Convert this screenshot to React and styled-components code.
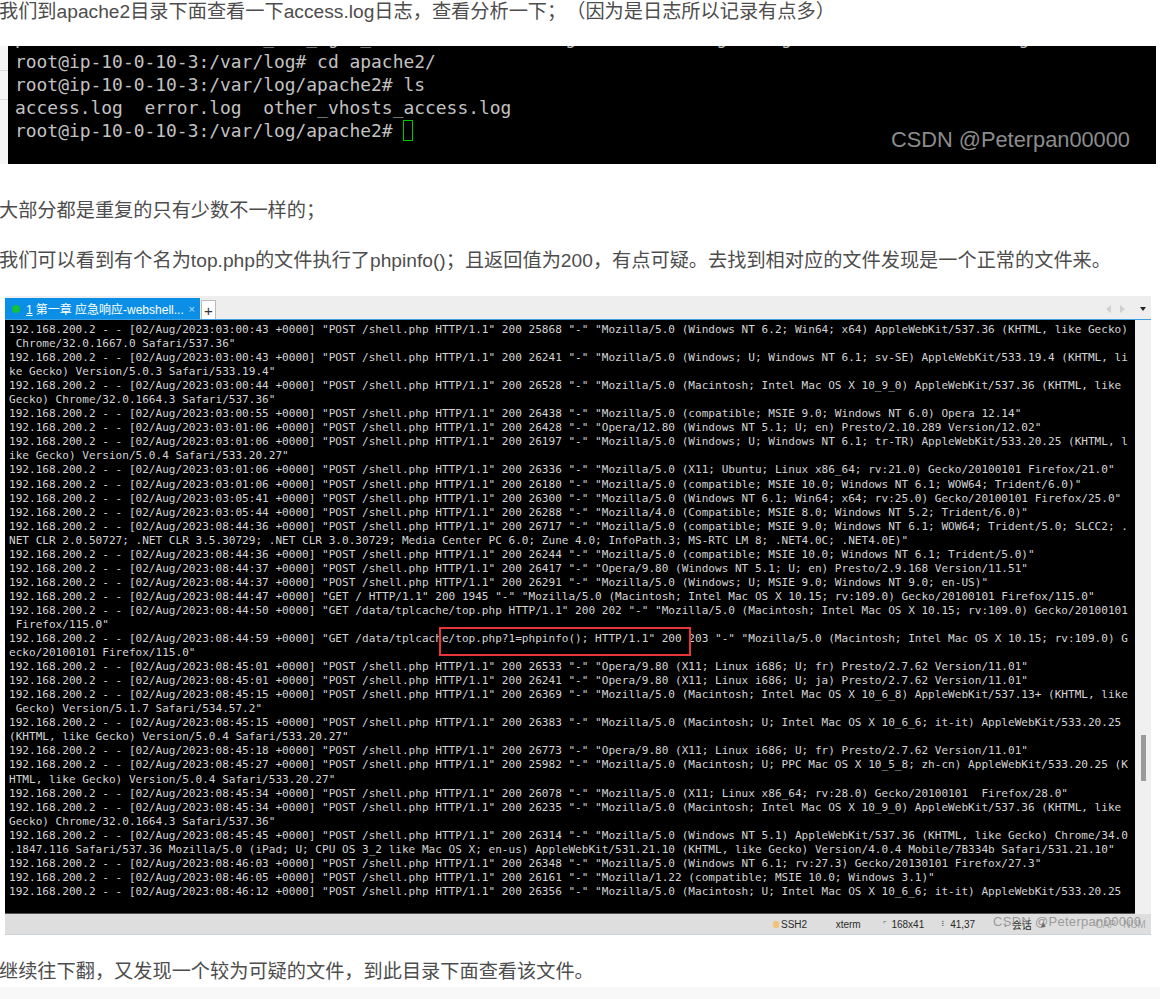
import React from "react";
import styled, { createGlobalStyle } from "styled-components";

const GlobalStyle = createGlobalStyle`
  html, body {
    margin: 0;
    padding: 0;
    background: #ffffff;
  }
`;

const Page = styled.div`
  width: 1160px;
  height: 999px;
  overflow: hidden;
  position: relative;
  display: flex;
  flex-direction: column;
  background: linear-gradient(#ffffff 987px, #f8f8f8 987px);
  font-family: "Liberation Sans", "Noto Sans CJK SC", sans-serif;
`;

const Para = styled.p`
  margin: ${(p) => p.$top}px 0 0 -1px;
  height: 24px;
  font-size: 19.2px;
  line-height: 24px;
  color: #4d4d4d;
  white-space: nowrap;
  text-spacing-trim: space-all;
`;

const ShotRow = styled.div`
  margin-top: 22px;
  height: 118px;
  display: flex;
`;

const SideStrip = styled.div`
  width: 8px;
  background: #f6f6f6;
  background-image: linear-gradient(#dddddd, #dddddd), linear-gradient(#dddddd, #dddddd);
  background-size: 100% 1px;
  background-position: 0 24px, 0 53px;
  background-repeat: no-repeat;
`;

const ShellShot = styled.div`
  position: relative;
  width: 1141px;
  background: #000000;
  overflow: hidden;
  padding-left: 7px;
  font-family: "DejaVu Sans Mono", monospace;
  font-size: 17.93px;
  line-height: 23px;
  color: #c2c2c2;
`;

const ShellLine = styled.div`
  white-space: pre;
  height: 23px;
`;

const CutLine = styled(ShellLine)`
  margin-top: -20px;
  margin-bottom: 1px;
`;

const Cursor = styled.span`
  display: inline-block;
  width: 8px;
  height: 19px;
  border: 1.5px solid #00c800;
  vertical-align: -4px;
`;

const ShotMark = styled.div`
  position: absolute;
  right: 26px;
  bottom: 11px;
  font-family: "Liberation Sans", sans-serif;
  font-size: 21.8px;
  line-height: 26px;
  color: #8c8c8c;
`;

const Window = styled.div`
  position: relative;
  margin: 23px 0 0 5px;
  width: 1146px;
  height: 639px;
  display: flex;
  flex-direction: column;
  background: #f0f0f0;
`;

const TabBar = styled.div`
  height: 23px;
  display: flex;
  align-items: flex-end;
  justify-content: space-between;
  background: #eeeeee;
  border-bottom: 1px solid #3f9ee0;
`;

const TabGroup = styled.div`
  display: flex;
  align-items: flex-end;
`;

const Tab = styled.div`
  width: 195px;
  height: 21px;
  box-sizing: border-box;
  padding: 0 7px;
  display: flex;
  align-items: center;
  background: #0b8fe6;
  color: #ffffff;
  font-family: "Liberation Sans", "Noto Sans CJK SC", sans-serif;
  font-size: 12px;
  white-space: nowrap;
`;

const TabDot = styled.span`
  width: 8px;
  height: 8px;
  border-radius: 50%;
  background: #12c23a;
  margin-right: 6px;
`;

const TabTitle = styled.span`
  flex: 1;
  min-width: 0;
`;

const TabNum = styled.span`
  text-decoration: underline;
  margin-right: 3px;
`;

const TabClose = styled.span`
  color: #b5dcf7;
  font-size: 11px;
  margin-right: -2px;
`;

const AddTab = styled.div`
  width: 15px;
  height: 19px;
  margin-left: 1px;
  background: #ffffff;
  border: 1px solid #bbbbbb;
  border-bottom: 0;
  box-sizing: border-box;
  display: flex;
  align-items: center;
  justify-content: center;
  font-size: 15px;
  line-height: 1;
  color: #333333;
`;

const TabNav = styled.div`
  display: flex;
  align-items: center;
  height: 21px;
  padding-right: 5px;
`;

const NavArrow = styled.span`
  width: 0;
  height: 0;
  border-top: 4px solid transparent;
  border-bottom: 4px solid transparent;
  margin-right: ${(p) => p.$gap}px;
  ${(p) =>
    p.$left
      ? "border-right: 5px solid #d0d0d0;"
      : "border-left: 5px solid #d0d0d0;"}
`;

const NavDown = styled.span`
  width: 0;
  height: 0;
  border-left: 3px solid transparent;
  border-right: 3px solid transparent;
  border-top: 4px solid #222222;
`;

const TermRow = styled.div`
  flex: 1;
  display: flex;
  min-height: 0;
`;

const Term = styled.pre`
  margin: 0;
  width: 1130px;
  box-sizing: border-box;
  padding: 3px 0 0 4px;
  background: #000000;
  border-bottom: 1px solid #555555;
  overflow: hidden;
  font-family: "DejaVu Sans Mono", monospace;
  font-size: 11.07px;
  line-height: 14.05px;
  color: #d4d4d4;
`;

const ScrollTrack = styled.div`
  flex: 1;
  padding-top: 415px;
  display: flex;
  justify-content: center;
  background: #f0f0f0;
`;

const ScrollThumb = styled.div`
  width: 5px;
  height: 46px;
  background: #9a9a9a;
`;

const StatusBar = styled.div`
  height: 20px;
  display: flex;
  align-items: center;
  padding-left: 768px;
  background: #dedede;
  border-bottom: 1px solid #ccd4da;
  font-size: 10px;
  color: #2a2a2a;
  white-space: nowrap;
`;

const StatusItem = styled.div`
  width: ${(p) => p.$w}px;
  display: flex;
  align-items: center;
  gap: 2px;
  color: ${(p) => (p.$dim ? "#a8a8a8" : "#2a2a2a")};
  font-family: "Liberation Sans", "Noto Sans CJK SC", sans-serif;
`;

const LockIcon = styled.span`
  width: 6px;
  height: 7px;
  border-radius: 2px;
  background: #f0c27a;
`;

const TinyGlyph = styled.span`
  width: 9px;
  text-align: center;
  font-size: 8px;
  color: #666666;
`;

const RedBox = styled.div`
  position: absolute;
  left: 434px;
  top: 331px;
  width: 248px;
  height: 25px;
  border: 2px solid #e8353a;
`;

const StatusMark = styled.div`
  position: absolute;
  left: 988px;
  top: 618px;
  font-size: 13px;
  letter-spacing: 0.3px;
  line-height: 16px;
  color: rgba(130, 130, 130, 0.75);
  white-space: nowrap;
`;

const logLines = [
  `192.168.200.2 - - [02/Aug/2023:03:00:43 +0000] "POST /shell.php HTTP/1.1" 200 25868 "-" "Mozilla/5.0 (Windows NT 6.2; Win64; x64) AppleWebKit/537.36 (KHTML, like Gecko)`,
  ` Chrome/32.0.1667.0 Safari/537.36"`,
  `192.168.200.2 - - [02/Aug/2023:03:00:43 +0000] "POST /shell.php HTTP/1.1" 200 26241 "-" "Mozilla/5.0 (Windows; U; Windows NT 6.1; sv-SE) AppleWebKit/533.19.4 (KHTML, li`,
  `ke Gecko) Version/5.0.3 Safari/533.19.4"`,
  `192.168.200.2 - - [02/Aug/2023:03:00:44 +0000] "POST /shell.php HTTP/1.1" 200 26528 "-" "Mozilla/5.0 (Macintosh; Intel Mac OS X 10_9_0) AppleWebKit/537.36 (KHTML, like`,
  `Gecko) Chrome/32.0.1664.3 Safari/537.36"`,
  `192.168.200.2 - - [02/Aug/2023:03:00:55 +0000] "POST /shell.php HTTP/1.1" 200 26438 "-" "Mozilla/5.0 (compatible; MSIE 9.0; Windows NT 6.0) Opera 12.14"`,
  `192.168.200.2 - - [02/Aug/2023:03:01:06 +0000] "POST /shell.php HTTP/1.1" 200 26428 "-" "Opera/12.80 (Windows NT 5.1; U; en) Presto/2.10.289 Version/12.02"`,
  `192.168.200.2 - - [02/Aug/2023:03:01:06 +0000] "POST /shell.php HTTP/1.1" 200 26197 "-" "Mozilla/5.0 (Windows; U; Windows NT 6.1; tr-TR) AppleWebKit/533.20.25 (KHTML, l`,
  `ike Gecko) Version/5.0.4 Safari/533.20.27"`,
  `192.168.200.2 - - [02/Aug/2023:03:01:06 +0000] "POST /shell.php HTTP/1.1" 200 26336 "-" "Mozilla/5.0 (X11; Ubuntu; Linux x86_64; rv:21.0) Gecko/20100101 Firefox/21.0"`,
  `192.168.200.2 - - [02/Aug/2023:03:01:06 +0000] "POST /shell.php HTTP/1.1" 200 26180 "-" "Mozilla/5.0 (compatible; MSIE 10.0; Windows NT 6.1; WOW64; Trident/6.0)"`,
  `192.168.200.2 - - [02/Aug/2023:03:05:41 +0000] "POST /shell.php HTTP/1.1" 200 26300 "-" "Mozilla/5.0 (Windows NT 6.1; Win64; x64; rv:25.0) Gecko/20100101 Firefox/25.0"`,
  `192.168.200.2 - - [02/Aug/2023:03:05:44 +0000] "POST /shell.php HTTP/1.1" 200 26288 "-" "Mozilla/4.0 (Compatible; MSIE 8.0; Windows NT 5.2; Trident/6.0)"`,
  `192.168.200.2 - - [02/Aug/2023:08:44:36 +0000] "POST /shell.php HTTP/1.1" 200 26717 "-" "Mozilla/5.0 (compatible; MSIE 9.0; Windows NT 6.1; WOW64; Trident/5.0; SLCC2; .`,
  `NET CLR 2.0.50727; .NET CLR 3.5.30729; .NET CLR 3.0.30729; Media Center PC 6.0; Zune 4.0; InfoPath.3; MS-RTC LM 8; .NET4.0C; .NET4.0E)"`,
  `192.168.200.2 - - [02/Aug/2023:08:44:36 +0000] "POST /shell.php HTTP/1.1" 200 26244 "-" "Mozilla/5.0 (compatible; MSIE 10.0; Windows NT 6.1; Trident/5.0)"`,
  `192.168.200.2 - - [02/Aug/2023:08:44:37 +0000] "POST /shell.php HTTP/1.1" 200 26417 "-" "Opera/9.80 (Windows NT 5.1; U; en) Presto/2.9.168 Version/11.51"`,
  `192.168.200.2 - - [02/Aug/2023:08:44:37 +0000] "POST /shell.php HTTP/1.1" 200 26291 "-" "Mozilla/5.0 (Windows; U; MSIE 9.0; Windows NT 9.0; en-US)"`,
  `192.168.200.2 - - [02/Aug/2023:08:44:47 +0000] "GET / HTTP/1.1" 200 1945 "-" "Mozilla/5.0 (Macintosh; Intel Mac OS X 10.15; rv:109.0) Gecko/20100101 Firefox/115.0"`,
  `192.168.200.2 - - [02/Aug/2023:08:44:50 +0000] "GET /data/tplcache/top.php HTTP/1.1" 200 202 "-" "Mozilla/5.0 (Macintosh; Intel Mac OS X 10.15; rv:109.0) Gecko/20100101`,
  ` Firefox/115.0"`,
  `192.168.200.2 - - [02/Aug/2023:08:44:59 +0000] "GET /data/tplcache/top.php?1=phpinfo(); HTTP/1.1" 200 203 "-" "Mozilla/5.0 (Macintosh; Intel Mac OS X 10.15; rv:109.0) G`,
  `ecko/20100101 Firefox/115.0"`,
  `192.168.200.2 - - [02/Aug/2023:08:45:01 +0000] "POST /shell.php HTTP/1.1" 200 26533 "-" "Opera/9.80 (X11; Linux i686; U; fr) Presto/2.7.62 Version/11.01"`,
  `192.168.200.2 - - [02/Aug/2023:08:45:01 +0000] "POST /shell.php HTTP/1.1" 200 26241 "-" "Opera/9.80 (X11; Linux i686; U; ja) Presto/2.7.62 Version/11.01"`,
  `192.168.200.2 - - [02/Aug/2023:08:45:15 +0000] "POST /shell.php HTTP/1.1" 200 26369 "-" "Mozilla/5.0 (Macintosh; Intel Mac OS X 10_6_8) AppleWebKit/537.13+ (KHTML, like`,
  ` Gecko) Version/5.1.7 Safari/534.57.2"`,
  `192.168.200.2 - - [02/Aug/2023:08:45:15 +0000] "POST /shell.php HTTP/1.1" 200 26383 "-" "Mozilla/5.0 (Macintosh; U; Intel Mac OS X 10_6_6; it-it) AppleWebKit/533.20.25`,
  `(KHTML, like Gecko) Version/5.0.4 Safari/533.20.27"`,
  `192.168.200.2 - - [02/Aug/2023:08:45:18 +0000] "POST /shell.php HTTP/1.1" 200 26773 "-" "Opera/9.80 (X11; Linux i686; U; fr) Presto/2.7.62 Version/11.01"`,
  `192.168.200.2 - - [02/Aug/2023:08:45:27 +0000] "POST /shell.php HTTP/1.1" 200 25982 "-" "Mozilla/5.0 (Macintosh; U; PPC Mac OS X 10_5_8; zh-cn) AppleWebKit/533.20.25 (K`,
  `HTML, like Gecko) Version/5.0.4 Safari/533.20.27"`,
  `192.168.200.2 - - [02/Aug/2023:08:45:34 +0000] "POST /shell.php HTTP/1.1" 200 26078 "-" "Mozilla/5.0 (X11; Linux x86_64; rv:28.0) Gecko/20100101  Firefox/28.0"`,
  `192.168.200.2 - - [02/Aug/2023:08:45:34 +0000] "POST /shell.php HTTP/1.1" 200 26235 "-" "Mozilla/5.0 (Macintosh; Intel Mac OS X 10_9_0) AppleWebKit/537.36 (KHTML, like`,
  `Gecko) Chrome/32.0.1664.3 Safari/537.36"`,
  `192.168.200.2 - - [02/Aug/2023:08:45:45 +0000] "POST /shell.php HTTP/1.1" 200 26314 "-" "Mozilla/5.0 (Windows NT 5.1) AppleWebKit/537.36 (KHTML, like Gecko) Chrome/34.0`,
  `.1847.116 Safari/537.36 Mozilla/5.0 (iPad; U; CPU OS 3_2 like Mac OS X; en-us) AppleWebKit/531.21.10 (KHTML, like Gecko) Version/4.0.4 Mobile/7B334b Safari/531.21.10"`,
  `192.168.200.2 - - [02/Aug/2023:08:46:03 +0000] "POST /shell.php HTTP/1.1" 200 26348 "-" "Mozilla/5.0 (Windows NT 6.1; rv:27.3) Gecko/20130101 Firefox/27.3"`,
  `192.168.200.2 - - [02/Aug/2023:08:46:05 +0000] "POST /shell.php HTTP/1.1" 200 26161 "-" "Mozilla/1.22 (compatible; MSIE 10.0; Windows 3.1)"`,
  `192.168.200.2 - - [02/Aug/2023:08:46:12 +0000] "POST /shell.php HTTP/1.1" 200 26356 "-" "Mozilla/5.0 (Macintosh; U; Intel Mac OS X 10_6_6; it-it) AppleWebKit/533.20.25`,
];

const App = () => {
  return (
    <Page>
      <GlobalStyle />
      <Para $top={0}>
        我们到apache2目录下面查看一下access.log日志，查看分析一下；（因为是日志所以记录有点多）
      </Para>
      <ShotRow>
        <SideStrip />
        <ShellShot>
          <CutLine>{"p                      _   _ g  _                  g             g     g                     g"}</CutLine>
          <ShellLine>root@ip-10-0-10-3:/var/log# cd apache2/</ShellLine>
          <ShellLine>root@ip-10-0-10-3:/var/log/apache2# ls</ShellLine>
          <ShellLine>access.log  error.log  other_vhosts_access.log</ShellLine>
          <ShellLine>
            root@ip-10-0-10-3:/var/log/apache2# <Cursor />
          </ShellLine>
          <ShotMark>CSDN @Peterpan00000</ShotMark>
        </ShellShot>
      </ShotRow>
      <Para $top={35}>大部分都是重复的只有少数不一样的；</Para>
      <Para $top={26}>
        我们可以看到有个名为top.php的文件执行了phpinfo()；且返回值为200，有点可疑。去找到相对应的文件发现是一个正常的文件来。
      </Para>
      <Window>
        <TabBar>
          <TabGroup>
            <Tab>
              <TabDot />
              <TabTitle>
                <TabNum>1</TabNum>第一章 应急响应-webshell...
              </TabTitle>
              <TabClose>×</TabClose>
            </Tab>
            <AddTab>+</AddTab>
          </TabGroup>
          <TabNav>
            <NavArrow $left $gap={9} />
            <NavArrow $gap={15} />
            <NavDown />
          </TabNav>
        </TabBar>
        <TermRow>
          <Term>{logLines.join("\n")}</Term>
          <ScrollTrack>
            <ScrollThumb />
          </ScrollTrack>
        </TermRow>
        <StatusBar>
          <StatusItem $w={63}>
            <LockIcon />
            SSH2
          </StatusItem>
          <StatusItem $w={45}>xterm</StatusItem>
          <StatusItem $w={59}>
            <TinyGlyph>⌜</TinyGlyph>
            168x41
          </StatusItem>
          <StatusItem $w={62}>
            <TinyGlyph>⠇</TinyGlyph>
            41,37
          </StatusItem>
          <StatusItem $w={38}>
            <TinyGlyph>↓</TinyGlyph>
            会话
          </StatusItem>
          <StatusItem $w={57}>
            <TinyGlyph>▲</TinyGlyph>
          </StatusItem>
          <StatusItem $w={28} $dim>
            CAP
          </StatusItem>
          <StatusItem $w={28} $dim>
            NUM
          </StatusItem>
        </StatusBar>
        <RedBox />
        <StatusMark>CSDN @Peterpan00000</StatusMark>
      </Window>
      <Para $top={25}>继续往下翻，又发现一个较为可疑的文件，到此目录下面查看该文件。</Para>
    </Page>
  );
};

export default App;
